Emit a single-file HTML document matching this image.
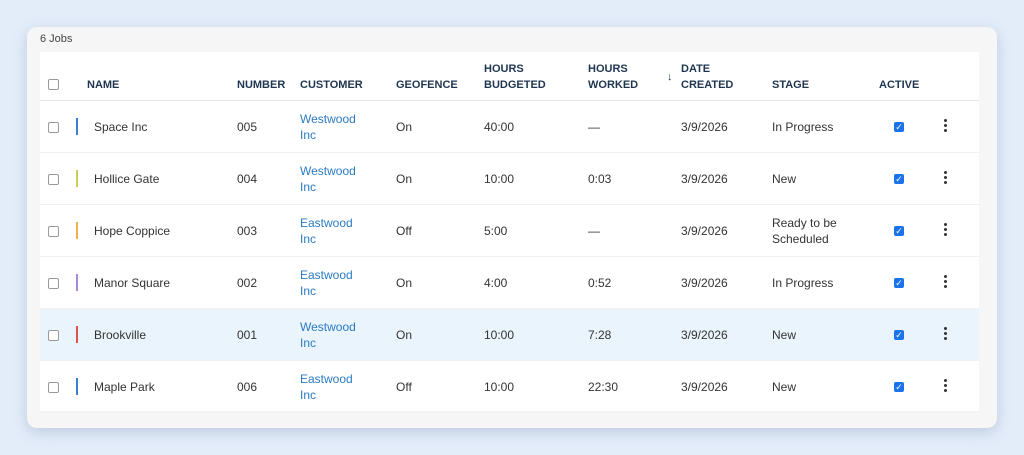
<!DOCTYPE html>
<html><head><style>
body{margin:0;width:1024px;height:455px;background:#e3edfa;font-family:"Liberation Sans",sans-serif;font-size:12px;color:#333;position:relative;overflow:hidden}
.card{position:absolute;left:27px;top:27px;width:970px;height:401px;background:#f6f6f6;border-radius:10px;box-shadow:0 4px 14px rgba(80,100,140,.25)}
.title{position:absolute;left:40px;top:33px;font-size:11px;color:#444}
.tbl{position:absolute;left:40px;top:52px;width:939px;height:359px;background:#fff}
.hdr{position:absolute;left:0;top:0;width:939px;height:48px;border-bottom:1px solid #e4e4e4}
.h{position:absolute;font-weight:bold;color:#1f3550;font-size:11px;line-height:16px}
.row{position:absolute;left:0;width:939px;height:51px;border-bottom:1px solid #f0f0f0}
.c{position:absolute;line-height:16px}
.cb{position:absolute;left:8px;width:9px;height:9px;border:1px solid #999;border-radius:2px;background:#fff}
.bar{position:absolute;left:36px;width:2px;height:17px}
.chk{position:absolute;left:854px;width:10px;height:10px;background:#1a73e8;border-radius:2px;color:#fff;font-size:9px;line-height:10px;text-align:center}
.dots{position:absolute;left:904px;width:3px}
.dots i{display:block;width:3px;height:3px;background:#333;border-radius:50%;margin-bottom:2px}
.link{color:#2a7bc4}
</style></head><body>
<div class="card"></div>
<div class="title">6 Jobs</div>
<div class="tbl">
<div class="hdr">
<div class="cb" style="top:27px"></div>
<div class="h" style="left:47px;top:25px">NAME</div>
<div class="h" style="left:197px;top:25px">NUMBER</div>
<div class="h" style="left:260px;top:25px">CUSTOMER</div>
<div class="h" style="left:356px;top:25px">GEOFENCE</div>
<div class="h" style="left:444px;top:9px">HOURS<br>BUDGETED</div>
<div class="h" style="left:548px;top:9px">HOURS<br>WORKED</div>
<div class="h" style="left:627px;top:17px;font-weight:normal">↓</div>
<div class="h" style="left:641px;top:9px">DATE<br>CREATED</div>
<div class="h" style="left:732px;top:25px">STAGE</div>
<div class="h" style="left:839px;top:25px">ACTIVE</div>
</div>
<div id="rows"></div>
</div>
<script>
const d=[["#3a7fd0","Space Inc","005","Westwood","On","40:00","—","In Progress"],
["#c8d05a","Hollice Gate","004","Westwood","On","10:00","0:03","New"],
["#f0b04a","Hope Coppice","003","Eastwood","Off","5:00","—","Ready to be<br>Scheduled"],
["#a98ad8","Manor Square","002","Eastwood","On","4:00","0:52","In Progress"],
["#d9534f","Brookville","001","Westwood","On","10:00","7:28","New"],
["#3a7fd0","Maple Park","006","Eastwood","Off","10:00","22:30","New"]];
let h="";
d.forEach((r,i)=>{const t=49+i*52;
h+=`<div class="row" style="top:${t}px;${i==4?'background:#eaf4fc':''}">
<div class="cb" style="top:21px"></div><div class="bar" style="top:17px;background:${r[0]}"></div>
<div class="c" style="left:54px;top:18px">${r[1]}</div>
<div class="c" style="left:197px;top:18px">${r[2]}</div>
<div class="c link" style="left:260px;top:10px">${r[3]}<br>Inc</div>
<div class="c" style="left:356px;top:18px">${r[4]}</div>
<div class="c" style="left:444px;top:18px">${r[5]}</div>
<div class="c" style="left:548px;top:18px">${r[6]}</div>
<div class="c" style="left:641px;top:18px">3/9/2026</div>
<div class="c" style="left:732px;top:${r[7].includes('<br>')?10:18}px">${r[7]}</div>
<div class="chk" style="top:21px">✓</div>
<div class="dots" style="top:18px"><i></i><i></i><i></i></div></div>`});
document.getElementById("rows").innerHTML=h;
</script>
</body></html>
